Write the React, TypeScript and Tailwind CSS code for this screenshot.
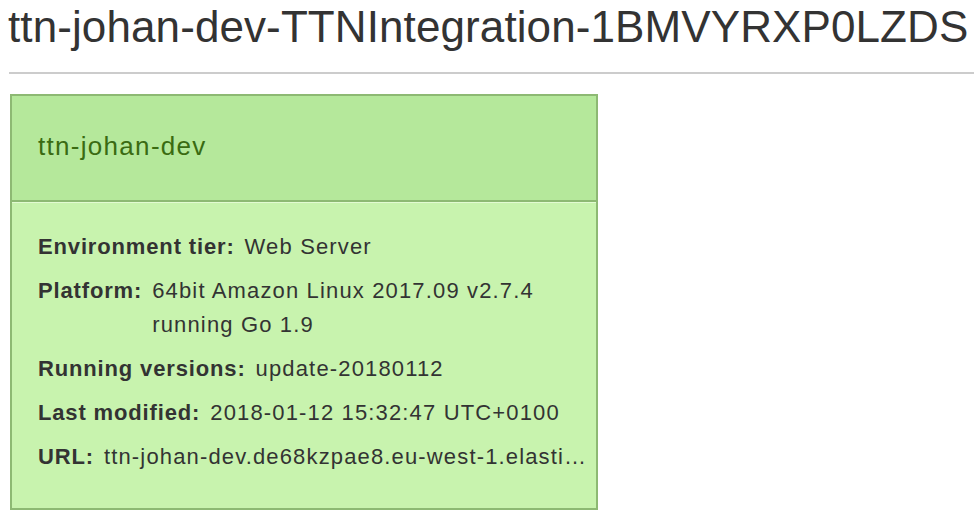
import React from "react";

const rows: { label: string; value: React.ReactNode }[] = [
  { label: "Environment tier:", value: "Web Server" },
  {
    label: "Platform:",
    value: (
      <>
        64bit Amazon Linux 2017.09 v2.7.4
        <br />
        running Go 1.9
      </>
    ),
  },
  { label: "Running versions:", value: "update-20180112" },
  { label: "Last modified:", value: "2018-01-12 15:32:47 UTC+0100" },
  { label: "URL:", value: "ttn-johan-dev.de68kzpae8.eu-west-1.elasti…" },
];

export default function App() {
  return (
    <div
      className="w-[974px] h-[522px] bg-white overflow-hidden text-[#333]"
      style={{ fontFamily: '"Liberation Sans", Arial, sans-serif' }}
    >
      <h1 className="pl-[8px] pt-[3px] text-[44px] leading-[48px] tracking-[0.1px] font-normal whitespace-nowrap">
        ttn-johan-dev-TTNIntegration-1BMVYRXP0LZDS
      </h1>
      <div className="ml-[9px] mt-[21px] h-[2px] bg-[#cccccc]" />
      <div className="ml-[10px] mt-[20px] w-[588px] h-[416px] border-2 border-[#8db973] flex flex-col">
        <div className="h-[104px] bg-[#b5e89b] flex items-center pl-[26px] pb-[4px] text-[26px] tracking-[1.3px] text-[#3a6b12]">
          ttn-johan-dev
        </div>
        <div className="flex-1 bg-[#c8f3ae] border-t-2 border-[#8db973] shadow-[inset_0_1px_0_#e2fbd2] pl-[26px] pt-[28px] flex flex-col gap-[10px] text-[22px] leading-[34px]">
          {rows.map((r) => (
            <div key={r.label} className="flex gap-[10px]">
              <span className="font-bold whitespace-nowrap tracking-[0.85px]">{r.label}</span>
              <span className="whitespace-nowrap tracking-[1.15px]">{r.value}</span>
            </div>
          ))}
        </div>
      </div>
    </div>
  );
}
